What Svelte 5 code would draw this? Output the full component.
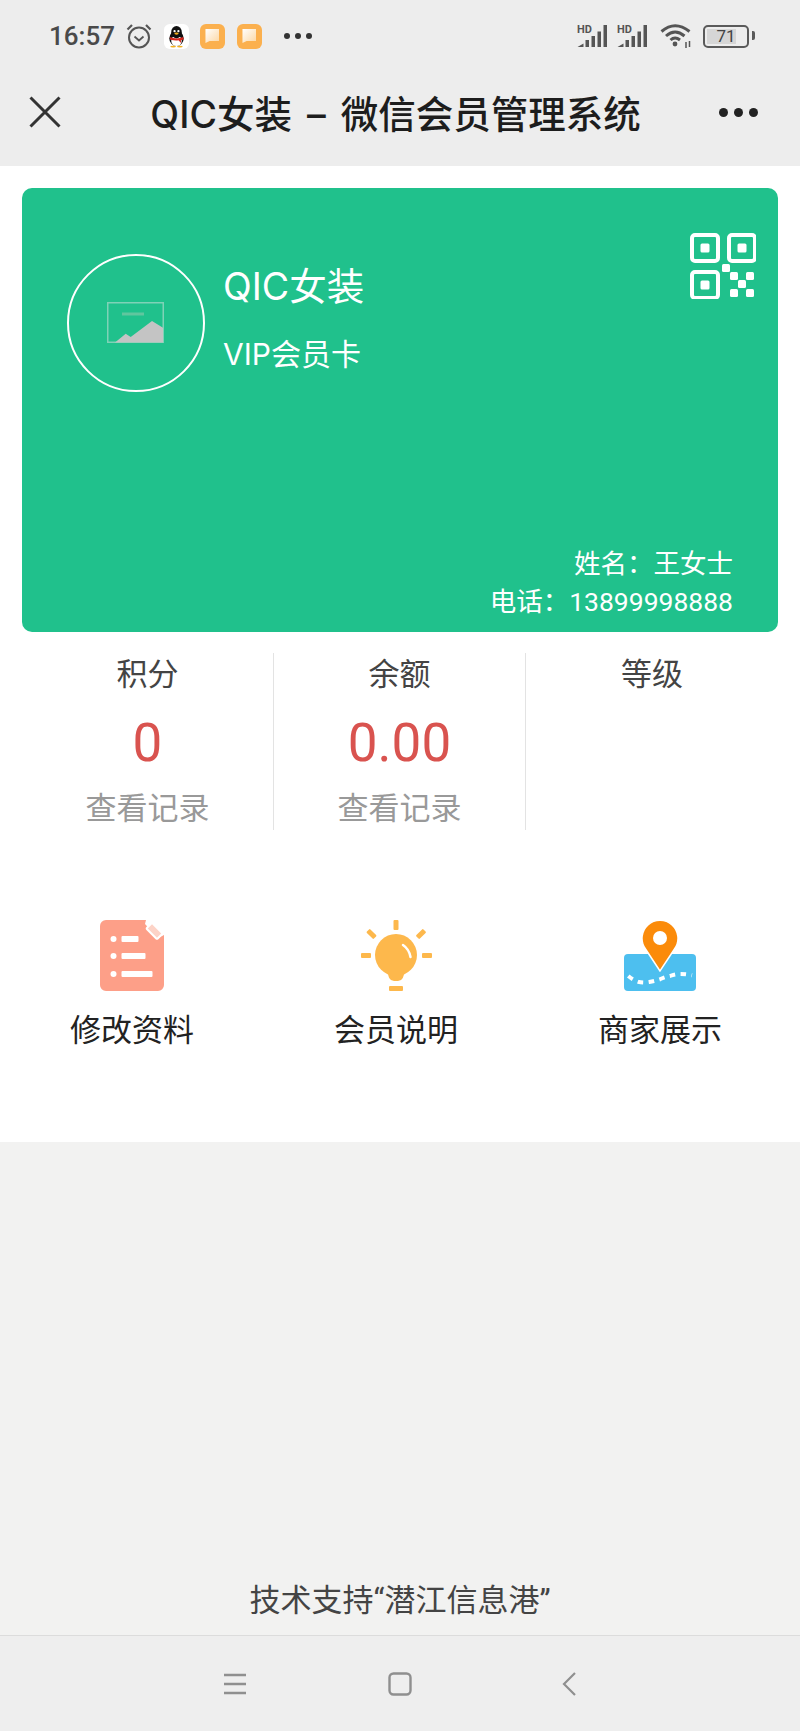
<script>
    const stats = [
        { label: "积分", value: "0", link: "查看记录" },
        { label: "余额", value: "0.00", link: "查看记录" },
        { label: "等级", value: "", link: "" },
    ];
</script>

<div class="page">
    <header class="top">
        <div class="status">
            <span class="time">16:57</span>
            <!-- 闹钟 -->
            <svg class="alarm" width="26" height="26" viewBox="0 0 26 26" fill="none" stroke="#555" stroke-width="2">
                <circle cx="13" cy="14.500" r="10" />
                <path d="M8.500 13.500l4.500 4 4.500-4" stroke-width="1.800" />
                <path d="M1.500 6.500L6 2M24.500 6.500L20 2" stroke-width="2.200" />
            </svg>
            <!-- QQ -->
            <svg class="app" width="25" height="25" viewBox="0 0 26 26">
                <rect width="26" height="26" rx="6" fill="#fff" />
                <ellipse cx="13" cy="15" rx="7.500" ry="8" fill="#111" />
                <ellipse cx="13" cy="17.500" rx="5.500" ry="5.500" fill="#fff" />
                <ellipse cx="13" cy="8.500" rx="5.500" ry="6.500" fill="#111" />
                <circle cx="11" cy="7.500" r="1.200" fill="#fff" />
                <circle cx="15" cy="7.500" r="1.200" fill="#fff" />
                <path d="M6 13.500q7 3 14 0l.5 2.500-3 1 .5 3-3-3q-3 .6-8.500-.5z" fill="#d8281f" />
                <ellipse cx="13" cy="10" rx="2.200" ry="1.100" fill="#f2b01e" />
                <ellipse cx="9.500" cy="23.500" rx="3" ry="1" fill="#f2b01e" />
                <ellipse cx="16.500" cy="23.500" rx="3" ry="1" fill="#f2b01e" />
            </svg>
            <span class="note"><i></i></span>
            <span class="note"><i></i></span>
            <span class="more-small"><i></i><i></i><i></i></span>

            <span class="spacer"></span>

            {#each [0, 1] as sim}
                <svg class="signal" width="31" height="24" viewBox="0 0 31 24">
                    <text x="0" y="8.500" font-size="11" font-weight="700" fill="#555" font-family="Roboto, sans-serif">HD</text>
                    <path d="M0.500 23l6-3.500V23zM8.500 16h3.500v7H8.500zM14.500 12h3.500v11h-3.500zM20.500 7.500h3.500V23h-3.500zM26.500 1h3.500v22h-3.500z" fill="#555" />
                </svg>
            {/each}
            <svg class="wifi" width="32" height="26" viewBox="0 0 32 26" fill="none" stroke="#555" stroke-width="3">
                <path d="M1.500 8.500Q15-3 29.500 8.500M6 13q9-8 18.500 0M10.500 17q4.500-4 9.500 0" />
                <circle cx="15" cy="21" r="2.400" fill="#555" stroke="none" />
                <path d="M26 19v6M29.500 18v6" stroke-width="1.500" />
            </svg>
            <span class="battery"><span class="level"></span><b>71</b></span>
        </div>

        <div class="title-bar">
            <svg class="close" width="32" height="32" viewBox="0 0 32 32" stroke="#333" stroke-width="3" fill="none">
                <path d="M1.500 1.500l29 29M30.500 1.500l-29 29" />
            </svg>
            <h1>QIC女装 – 微信会员管理系统</h1>
            <span class="more"><i></i><i></i><i></i></span>
        </div>
    </header>

    <main>
        <section class="card">
            <div class="card-top">
                <div class="avatar">
                    <!-- 占位图 -->
                    <svg width="58" height="42" viewBox="0 0 58 42">
                        <rect x="0.750" y="0.750" width="55.500" height="39.500" fill="none" stroke="#7fd2b7" stroke-width="1.500" />
                        <path d="M15 12h22" stroke="#7cc9a6" stroke-width="3" opacity="0.700" />
                        <path d="M8 40.500L18.700 31.700l5 3.300L45 19l11 6.700v14.800z" fill="#c4c4c4" />
                    </svg>
                </div>
                <div class="shop">
                    <div class="shop-name">QIC女装</div>
                    <div class="shop-type">VIP会员卡</div>
                </div>
                <svg class="qr" width="66" height="66" viewBox="0 0 66 66">
                    <g fill="none" stroke="#fff" stroke-width="4">
                        <rect x="2" y="2" width="26" height="26" rx="3" />
                        <rect x="39" y="2" width="26" height="26" rx="3" />
                        <rect x="2" y="39" width="26" height="26" rx="3" />
                    </g>
                    <g fill="#fff">
                        <rect x="10.500" y="10.500" width="9" height="9" rx="1.500" />
                        <rect x="47.500" y="10.500" width="9" height="9" rx="1.500" />
                        <rect x="10.500" y="47.500" width="9" height="9" rx="1.500" />
                        <rect x="32" y="31" width="8" height="8" rx="1.500" />
                        <rect x="40" y="39" width="8" height="8" rx="1.500" />
                        <rect x="56" y="39" width="8" height="8" rx="1.500" />
                        <rect x="48" y="47" width="8" height="8" rx="1.500" />
                        <rect x="40" y="56" width="8" height="8" rx="1.500" />
                        <rect x="56" y="56" width="8" height="8" rx="1.500" />
                    </g>
                </svg>
            </div>
            <div class="member">
                <div>姓名：王女士</div>
                <div>电话：13899998888</div>
            </div>
        </section>

        <section class="stats">
            {#each stats as s}
                <div class="stat">
                    <div class="stat-label">{s.label}</div>
                    <div class="stat-value">{s.value}</div>
                    <div class="stat-link">{s.link}</div>
                </div>
            {/each}
        </section>

        <section class="menu">
            <div class="menu-item">
                <svg width="64" height="72" viewBox="0 0 64 72">
                    <path d="M6 0H46l-1 4 13 14 6-3V65a6 6 0 0 1-6 6H6a6 6 0 0 1-6-6V6a6 6 0 0 1 6-6z" fill="#fd9f88" />
                    <rect x="47" y="7" width="15" height="8" rx="1" transform="rotate(45 54.500 11)" fill="#fdd3c7" stroke="#fff" stroke-width="2" />
                    <g fill="#fff">
                        <circle cx="13.500" cy="19" r="3" />
                        <rect x="21.500" y="16" width="17" height="6" rx="1" />
                        <circle cx="13.500" cy="36" r="3" />
                        <rect x="21.500" y="33" width="24" height="6" rx="1" />
                        <circle cx="13.500" cy="54" r="3" />
                        <rect x="21.500" y="51" width="31" height="6" rx="1" />
                    </g>
                </svg>
                <span>修改资料</span>
            </div>
            <div class="menu-item">
                <svg width="72" height="72" viewBox="0 0 72 72">
                    <g fill="#fdb84c">
                        <rect x="33.500" y="0" width="5" height="10" rx="1" />
                        <rect x="9" y="9" width="5" height="10" rx="1" transform="rotate(-45 11.500 14)" />
                        <rect x="58.500" y="9" width="5" height="10" rx="1" transform="rotate(45 61 14)" />
                        <rect x="1" y="33" width="10" height="5" rx="1" />
                        <rect x="62" y="33" width="10" height="5" rx="1" />
                        <rect x="29" y="66" width="14" height="5" rx="1" />
                        <circle cx="36" cy="35" r="21" />
                        <path d="M28 50q-.5 11 6 11h4q6.500 0 6-11z" />
                    </g>
                    <path d="M43 25q6 4 7.500 12" fill="none" stroke="#fff" stroke-width="2.500" stroke-linecap="round" />
                </svg>
                <span>会员说明</span>
            </div>
            <div class="menu-item">
                <svg width="72" height="72" viewBox="0 0 72 72">
                    <rect x="0" y="34" width="72" height="37" rx="4" fill="#4dbfef" />
                    <path d="M4.300 56Q9 60 14 61.700 20 63 25.300 62 31 61 36 59.300 41 57 46 56 51 54 56 54 62 54 68 55.300" fill="none" stroke="#fff" stroke-width="4" stroke-dasharray="5.500 5.500" />
                    <path d="M36 51L21.500 29a18 18 0 1 1 29 0z" fill="#fb8b0a" stroke="#fff" stroke-width="1.500" />
                    <circle cx="36" cy="18" r="7" fill="#fff" />
                </svg>
                <span>商家展示</span>
            </div>
        </section>
    </main>

    <footer>
        <div class="support">技术支持“潜江信息港”</div>
        <nav>
            <svg width="22" height="22" viewBox="0 0 22 22" stroke="#8f8f8f" stroke-width="2.400">
                <path d="M0 2h22M0 11h22M0 20h22" />
            </svg>
            <svg class="home" width="24" height="24" viewBox="0 0 24 24" fill="none" stroke="#8f8f8f" stroke-width="2.400">
                <rect x="1.500" y="1.500" width="21" height="21" rx="4" />
            </svg>
            <svg width="14" height="24" viewBox="0 0 14 24" fill="none" stroke="#8f8f8f" stroke-width="2.200">
                <path d="M13 1L2 12l11 11" />
            </svg>
        </nav>
    </footer>
</div>

<style>
    :global(body) {
        margin: 0;
        background: #f2f2f1;
    }

    .page {
        width: 800px;
        height: 1731px;
        display: flex;
        flex-direction: column;
        overflow: hidden;
        font-family: Roboto, "Noto Sans CJK SC", sans-serif;
        color: #333;
    }

    /* 状态栏 + 标题栏 */
    .top {
        height: 166px;
        background: #ededed;
        flex-shrink: 0;
    }

    .status {
        height: 72px;
        padding: 0 51px 0 49px;
        display: flex;
        align-items: center;
        box-sizing: border-box;
    }

    .time {
        font-size: 26px;
        font-weight: 500;
        color: #4a4a4a;
        margin-right: 11px;
    }

    .alarm {
        margin-right: 12px;
    }

    .app {
        margin-right: 11px;
    }

    .note {
        width: 25px;
        height: 25px;
        border-radius: 6px;
        background: #fbb04e;
        margin-right: 12px;
        display: flex;
        align-items: center;
        justify-content: center;
    }

    .note i {
        width: 14px;
        height: 14px;
        background: linear-gradient(135deg, #fff, #fcd7a3);
        clip-path: polygon(0 0, 100% 0, 100% 85%, 30% 85%, 0 100%);
    }

    .more-small {
        display: flex;
        gap: 5px;
        margin-left: 10px;
    }

    .more-small i {
        width: 6px;
        height: 6px;
        border-radius: 50%;
        background: #333;
    }

    .spacer {
        flex: 1;
    }

    .signal {
        margin-right: 9px;
    }

    .wifi {
        margin: 0 11px 0 3px;
    }

    .battery {
        width: 46px;
        height: 23px;
        border: 2.500px solid #5a5a5a;
        border-radius: 5px;
        box-sizing: border-box;
        position: relative;
        display: flex;
        align-items: center;
        justify-content: center;
    }

    .battery::after {
        content: "";
        position: absolute;
        right: -8px;
        top: 4px;
        width: 3px;
        height: 9px;
        border-radius: 0 2px 2px 0;
        background: #5a5a5a;
    }

    .level {
        position: absolute;
        left: 2px;
        top: 2px;
        bottom: 2px;
        width: 68%;
        background: #d6d6d6;
    }

    .battery b {
        position: relative;
        font-size: 17px;
        font-weight: 400;
        color: #444;
    }

    .title-bar {
        height: 80px;
        padding: 0 42px 0 29px;
        display: flex;
        align-items: center;
        justify-content: space-between;
    }

    h1 {
        margin: -2px 0 0 11px;
        font-family: Inter, "Noto Sans CJK SC", sans-serif;
        font-size: 37.500px;
        font-weight: 500;
        word-spacing: 5px;
        color: #1d1d1d;
    }

    .more {
        display: flex;
        gap: 6px;
    }

    .more i {
        width: 9px;
        height: 9px;
        border-radius: 50%;
        background: #222;
    }

    main {
        height: 976px;
        background: #fff;
        padding: 22px 22px 0;
        box-sizing: border-box;
        flex-shrink: 0;
    }

    /* 会员卡 */
    .card {
        height: 444px;
        background: #20c18c;
        border-radius: 10px;
        color: #fff;
        box-sizing: border-box;
        padding: 66px 45px 11px;
        display: flex;
        flex-direction: column;
        justify-content: space-between;
    }

    .card-top {
        display: flex;
        position: relative;
    }

    .avatar {
        width: 138px;
        height: 138px;
        border: 2px solid #fff;
        border-radius: 50%;
        box-sizing: border-box;
        display: flex;
        align-items: center;
        justify-content: center;
    }

    .shop {
        margin-left: 18px;
        padding-top: 8px;
    }

    .shop-name {
        font-family: Inter, "Noto Sans CJK SC", sans-serif;
        font-size: 37.500px;
        line-height: 50px;
    }

    .shop-type {
        font-family: Inter, "Noto Sans CJK SC", sans-serif;
        font-size: 30px;
        line-height: 40px;
        margin-top: 22px;
    }

    .qr {
        position: absolute;
        right: -23px;
        top: -21px;
    }

    .member {
        text-align: right;
        font-size: 26.500px;
        line-height: 38px;
    }

    /* 积分 / 余额 / 等级 */
    .stats {
        display: flex;
        margin-top: 21px;
    }

    .stat {
        width: 252px;
        height: 177px;
        padding-top: 1px;
        text-align: center;
        border-right: 1px solid #e3e3e3;
        box-sizing: border-box;
    }

    .stat:last-child {
        border-right: none;
    }

    .stat-label {
        font-size: 31px;
        line-height: 42px;
        color: #444;
    }

    .stat-value {
        font-size: 53px;
        line-height: 64px;
        height: 64px;
        margin-top: 15px;
        color: #d9534f;
    }

    .stat-link {
        font-size: 31px;
        line-height: 42px;
        margin-top: 13px;
        color: #999;
    }

    /* 功能入口 */
    .menu {
        display: flex;
        margin: 90px -22px 0;
    }

    .menu-item {
        width: 264px;
        flex-shrink: 0;
        display: flex;
        flex-direction: column;
        align-items: center;
        gap: 18px;
    }

    .menu-item span {
        font-size: 31px;
        line-height: 42px;
        color: #222;
    }

    footer {
        flex: 1;
        display: flex;
        flex-direction: column;
        justify-content: flex-end;
    }

    .support {
        text-align: center;
        font-size: 31px;
        line-height: 42px;
        color: #444;
        margin-bottom: 13px;
    }

    nav {
        height: 96px;
        background: #eeeeee;
        border-top: 1px solid #dcdcdc;
        box-sizing: border-box;
        display: flex;
        align-items: center;
        justify-content: center;
        gap: 146px;
    }

    .home {
        margin: 0 4px 0 -4px;
    }
</style>
